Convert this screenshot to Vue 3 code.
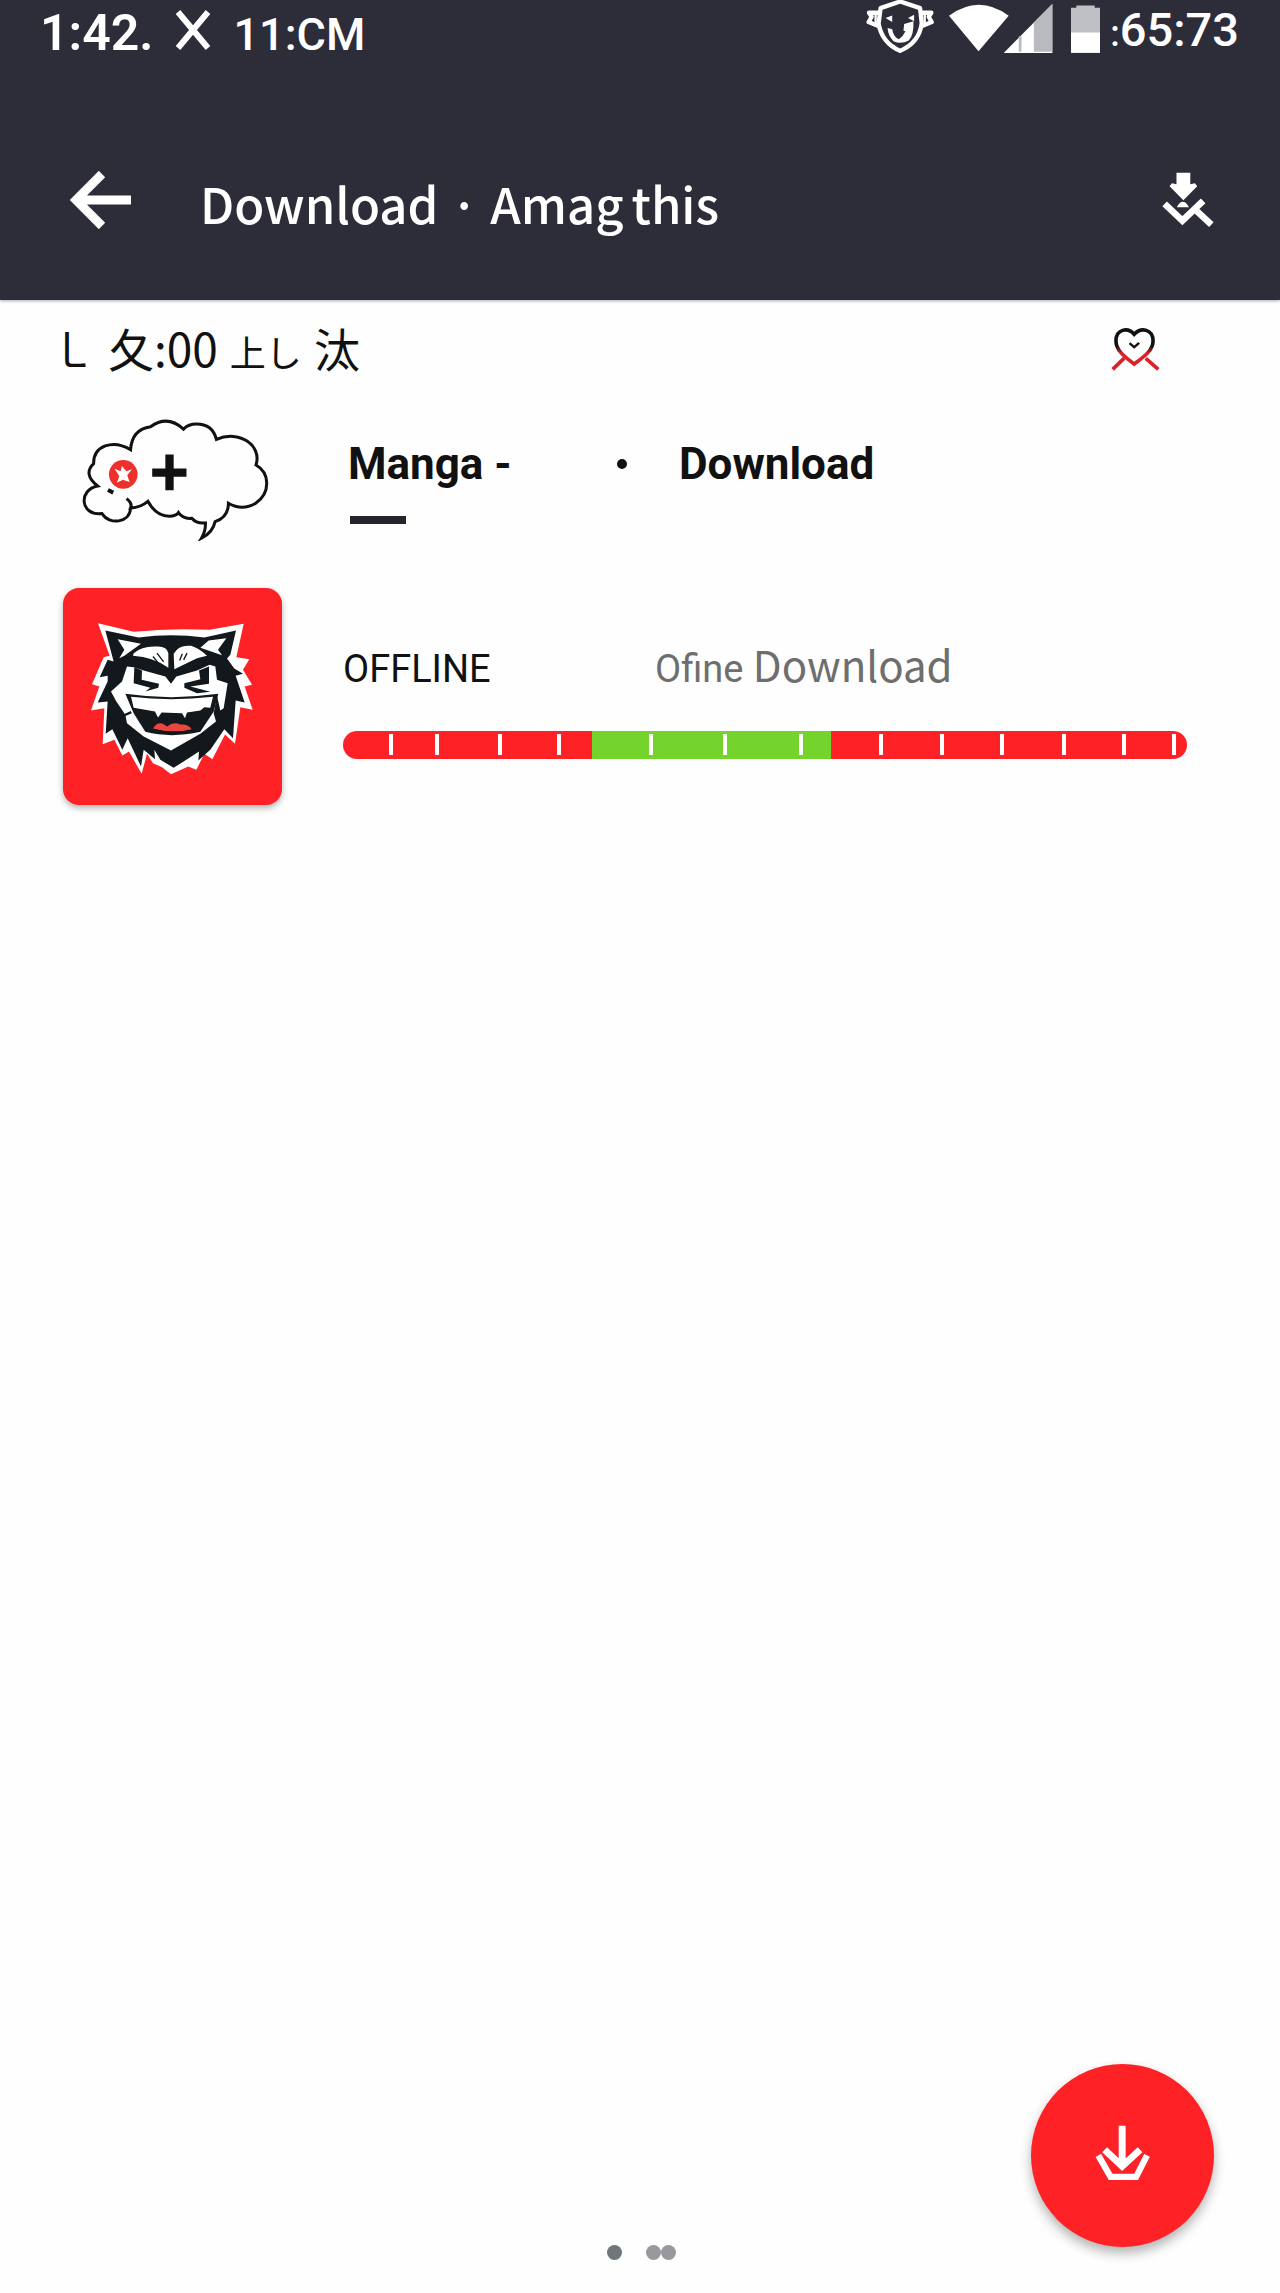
<template>
  <div class="page">
    <header class="topo">
      <div class="status">
        <div class="status-texto">
          <span class="hora">1:42.</span>
          <svg class="icone-x" viewBox="0 0 36 40" aria-hidden="true">
            <path d="M3 2 L33 38 M33 2 L3 38" stroke="#fff" stroke-width="6" />
          </svg>
          <span class="operadora">11:CM</span>
        </div>
        <div class="status-icones">
          <svg class="mascote" viewBox="75 0 205 165" aria-hidden="true">
            <g fill="none" stroke="#fff" stroke-width="13" stroke-linejoin="round">
              <path d="M119 24 L178 4 L238 24 L243 70 Q236 128 178 153 Q122 128 113 70 Z" />
              <path d="M117 38 L84 38 L92 50 L83 66 L112 78 M240 38 L272 38 L264 50 L273 66 L244 78" />
              <path d="M104 40 V72 M252 40 V72" stroke-width="7" />
            </g>
            <path d="M134 54 L154 46 L154 66 Z M202 54 L220 44 L220 64 Z" fill="#fff" />
            <path d="M140 84 L154 88 Q158 112 174 118 Q188 108 194 94 L188 92 L190 72 L218 64 Q220 104 204 122 Q180 134 158 124 Q142 108 140 84 Z" fill="#fff" />
          </svg>
          <svg class="rede" viewBox="325 12 310 146" aria-hidden="true">
            <path d="M325 47 Q414 -18 503 47 L413 153 Z" fill="#fff" />
            <path d="M633 12 L633 158 L488 158 Z" fill="#fff" />
            <path d="M633 12 L633 154 L578 154 L578 67 Z" fill="#b9b9c0" />
            <path d="M537 108 L537 154" stroke="#b9b9c0" stroke-width="8" />
          </svg>
          <svg class="bateria" viewBox="690 14 87 143" aria-hidden="true">
            <path d="M690 22 H706 V15 H761 V22 H777 V157 H690 Z" fill="#bfbfc6" />
            <path d="M690 96 H777 V157 H690 Z" fill="#fff" />
          </svg>
          <span class="relogio"><small>:</small>65:73</span>
        </div>
      </div>
      <div class="barra">
        <button class="botao-icone" aria-label="Back">
          <svg class="seta" viewBox="0 0 62 58">
            <path d="M32 3 L6 29 L32 55 M7 29 H61" fill="none" stroke="#fff" stroke-width="9" />
          </svg>
        </button>
        <h1><span>Download</span><span class="ponto-titulo">·</span><span>Amag</span><span class="fim-titulo">this</span></h1>
        <button class="botao-icone" aria-label="Downloads">
          <svg class="baixados" viewBox="965 510 158 170">
            <path d="M1009 512 H1051 V547 L1065 544 L1072 553 L1030 596 L988 553 L995 544 L1009 547 Z" fill="#fff" />
            <path d="M1010 617 Q1028 584 1047 617 Z" fill="#fff" />
            <path d="M973 607 L1027 658 L1090 598 M1066 624 L1115 670" fill="none" stroke="#fff" stroke-width="20" />
          </svg>
        </button>
      </div>
    </header>

    <main>
      <div class="linha-data">
        <p><span>㇄</span><span>夂:00</span><span class="menor">上し</span><span>汰</span></p>
        <button class="botao-icone" aria-label="Favorite">
          <svg class="coracao" viewBox="153 78 148 134">
            <defs>
              <linearGradient id="corte" x1="0" y1="80" x2="0" y2="195" gradientUnits="userSpaceOnUse">
                <stop offset="0.48" stop-color="#111" />
                <stop offset="0.66" stop-color="#dc2229" />
              </linearGradient>
            </defs>
            <path d="M223 99 C203 76 168 84 168 119 C168 149 197 168 223 189 C250 168 280 149 280 119 C280 84 244 76 223 99 Z" fill="none" stroke="url(#corte)" stroke-width="11" />
            <path d="M209 126 L223 138 L238 125" fill="none" stroke="#111" stroke-width="7" />
            <path d="M193 171 L158 205 M258 172 L296 205" fill="none" stroke="#dc2229" stroke-width="11" />
          </svg>
        </button>
      </div>

      <section class="item">
        <svg class="balao" viewBox="245 350 565 375" aria-hidden="true">
          <g fill="none" stroke="#111" stroke-width="9" stroke-linejoin="miter">
            <path d="M382 598 Q400 612 394 626 Q425 624 446 606 Q470 650 510 651 Q532 650 538 640 Q552 660 578 657 Q592 674 619 671 Q620 696 607 717 Q641 700 648 667 Q688 654 688 612 Q730 636 770 612 C816 580 812 520 771 497 C790 438 720 390 652 420 Q640 374 592 374 Q568 374 553 389 Q505 345 454 382 Q398 390 394 451 C340 418 282 440 283 493 Q250 524 295 560 C238 570 240 650 308 643 C330 678 392 672 394 626" />
          </g>
          <circle cx="372" cy="525" r="43" fill="#ee302c" />
          <path d="M368 500 L381 516 L398 510 L384 528 L391 548 L371 541 L353 550 L360 530 L346 508 L364 516 Z" fill="#fff" />
          <path d="M326 572 L342 580" stroke="#111" stroke-width="12" />
          <path d="M459 520 H562 M511 465 V573" stroke="#111" stroke-width="25" />
        </svg>
        <div class="item-corpo">
          <h2 class="titulo">
            <span>Manga -</span><span class="ponto"></span><span class="titulo-acao">Download</span>
          </h2>
          <div class="traco"></div>
        </div>
      </section>

      <section class="item">
        <div class="capa">
          <svg viewBox="38 55 657 650" aria-hidden="true">
            <path fill="#fff" d="M143 160 L250 186 Q362 174 478 180 L580 162 L558 262 L597 268 L578 300 L605 345 L583 350 L607 420 L570 412 L554 522 L524 494 L486 568 L462 552 L438 600 L414 590 L362 613 L335 592 L308 580 L290 552 L274 612 L236 545 L216 557 L192 510 L157 523 L162 415 L122 422 L147 350 L125 343 L160 262 L178 258 Z" />
            <path fill="#13181c" d="M165 182 L265 203 Q362 190 462 203 L557 182 L540 255 L530 266 L552 296 L578 312 L556 318 L583 398 L556 392 L548 505 L522 478 L480 540 L444 572 L446 545 L408 570 L370 594 L330 570 L312 540 L314 568 L280 540 L272 590 L232 505 L216 540 L186 478 L166 492 L172 395 L142 398 L172 335 L172 318 L148 322 L172 270 L190 275 Z" />
            <path fill="#fff" d="M202 208 L272 222 L222 258 L207 265 L222 240 Z M528 205 L475 212 L450 234 L515 256 L503 240 Z" />
            <path fill="#fff" d="M250 250 Q275 228 318 230 Q350 228 354 250 L354 294 Q310 262 248 258 Z M370 252 Q385 224 422 228 Q445 234 470 258 L440 265 L372 298 Z" />
            <path fill="none" stroke="#13181c" stroke-width="4" d="M308 260 L326 282 M320 250 L340 276 M388 272 L396 252 M400 270 L410 250" />
            <path fill="#fff" d="M230 290 L250 292 L280 302 L345 320 L362 342 L378 320 L440 302 L478 285 L495 290 L500 330 L532 340 L520 415 L510 422 L500 378 L490 430 L497 455 L450 492 L362 542 L280 500 L230 460 L225 435 L198 395 L182 365 L215 335 Z" />
            <path fill="#13181c" d="M252 292 L275 302 L274 330 L326 342 L324 354 L285 365 L268 378 L300 354 L250 340 Z M476 290 L446 302 L450 328 L402 340 L402 354 L440 370 L480 366 L420 350 L476 342 Z" />
            <path fill="#13181c" d="M225 372 Q362 392 504 372 L490 425 L450 486 Q362 506 285 486 L250 430 Z" />
            <path fill="#fff" d="M242 381 Q362 395 488 381 L480 414 L462 412 L450 422 L410 428 L404 445 L395 430 L334 428 L323 443 L314 425 L250 414 Z" />
            <path fill="none" stroke="#13181c" stroke-width="7" d="M214 440 L243 427" />
            <path fill="#ea4640" d="M308 476 Q320 456 338 462 L350 470 Q370 454 390 464 Q415 462 424 478 Q365 492 308 476 Z" />
          </svg>
        </div>
        <div class="item-corpo">
          <div class="estado">
            <span>OFFLINE</span>
            <span class="detalhe">Ofine <b>Download</b></span>
          </div>
          <div class="progresso" role="img" aria-label="Download">
            <div class="feito" :style="{ left: inicio + '%', width: feito + '%' }"></div>
            <i v-for="m in marcas" :key="m" class="marca" :style="{ left: m + '%' }"></i>
          </div>
        </div>
      </section>
    </main>

    <footer>
      <span class="bolinha escura"></span>
      <span class="bolinha"></span>
      <span class="bolinha"></span>
    </footer>

    <button class="fab" aria-label="Download">
      <svg viewBox="286 282 166 168">
        <path d="M368 284 V405 M315 356 L368 406 L422 356" fill="none" stroke="#fff" stroke-width="21" />
        <path d="M296 373 L333 438 H410 L443 373" fill="none" stroke="#fff" stroke-width="19" />
      </svg>
    </button>
  </div>
</template>

<script setup>
import { ref } from 'vue';

// posições em % da largura da barra
const inicio = ref(29.5);
const feito = ref(28.3);
const marcas = ref([5.4, 10.9, 18.4, 25.4, 36.3, 45, 54, 63.5, 70.7, 77.9, 85.2, 92.3, 98.2]);
</script>

<style>
body {
  margin: 0;
  background-color: #fefefe;
}
</style>

<style scoped>
.page {
  min-height: 100vh;
  display: flex;
  flex-direction: column;
  font-family: Roboto, "Noto Sans CJK JP", sans-serif;
  color: #111;
}

.page svg {
  display: block;
  flex-shrink: 0;
}

.botao-icone {
  border: none;
  background: none;
  padding: 0;
  cursor: pointer;
}

.topo {
  background-color: #2c2d39;
  color: white;
  box-shadow: 0 1px 3px rgba(44, 45, 57, 0.4);
}

.status {
  display: flex;
  justify-content: space-between;
  align-items: flex-start;
  height: 100px;
  padding: 0 41px 0 40px;
}

.status-texto {
  display: flex;
  align-items: baseline;
  line-height: 66px;
}

.hora {
  font-size: 50px;
  font-weight: 600;
}

.icone-x {
  width: 36px;
  height: 40px;
  margin: 0 23px 0 21px;
}

.operadora {
  font-size: 45px;
  font-weight: 500;
}

.status-icones {
  display: flex;
  align-items: flex-start;
}

.mascote {
  width: 68px;
  height: 55px;
}

.rede {
  width: 104px;
  height: 49px;
  margin: 4px 18px 0 15px;
}

.bateria {
  width: 29px;
  height: 48px;
  margin-top: 5px;
}

.relogio {
  margin-left: 10px;
  font-size: 47px;
  font-weight: 500;
  line-height: 60px;
}

.relogio small {
  font-size: 36px;
}

.barra {
  display: flex;
  align-items: center;
  height: 200px;
  padding: 0 66px 0 70px;
}

.seta {
  width: 62px;
  height: 58px;
}

.barra h1 {
  flex: 1;
  display: flex;
  margin: 4px 0 0 68px;
  font-family: "Noto Sans CJK JP", sans-serif;
  font-size: 49px;
  font-weight: 500;
}

.ponto-titulo {
  width: 52px;
  text-align: center;
}

.fim-titulo {
  margin-left: 8px;
}

.baixados {
  width: 52px;
  height: 56px;
}

.linha-data {
  display: flex;
  align-items: center;
  justify-content: space-between;
  height: 98px;
  margin-bottom: 2px;
  padding: 0 120px 0 50px;
}

.linha-data p {
  display: flex;
  align-items: baseline;
  gap: 12px;
  margin: 0;
  font-family: "Noto Sans CJK JP", sans-serif;
  font-size: 46px;
  line-height: 64px;
}

.linha-data .menor {
  font-size: 36px;
}

.coracao {
  width: 49px;
  height: 45px;
}

.item {
  display: flex;
  padding: 0 93px 0 63px;
}

.item-corpo {
  flex: 1;
  margin-left: 61px;
}

.balao {
  width: 188px;
  height: 125px;
  margin: 16px 13px 47px 18px;
}

.titulo {
  display: flex;
  align-items: center;
  margin: 36px 0 24px 5px;
  font-size: 44px;
  line-height: 56px;
  font-weight: 700;
}

.titulo span:first-child {
  width: 269px;
}

.ponto {
  width: 10px;
  height: 10px;
  border-radius: 50%;
  background-color: #111;
}

.titulo-acao {
  margin-left: 52px;
}

.traco {
  width: 56px;
  height: 8px;
  margin-left: 7px;
  background-color: #23252b;
}

.capa {
  width: 219px;
  height: 217px;
  border-radius: 16px;
  background-color: #fe2126;
  box-shadow: 0 3px 6px rgba(0, 0, 0, 0.3);
}

.capa svg {
  width: 100%;
  height: 100%;
}

.estado {
  display: flex;
  align-items: baseline;
  margin-top: 46px;
  font-size: 38px;
  line-height: 60px;
}

.estado span:first-child {
  width: 312px;
}

.detalhe {
  color: #6e6e6e;
}

.detalhe b {
  font-family: "Noto Sans CJK JP", sans-serif;
  font-size: 42px;
  font-weight: 400;
}

.progresso {
  position: relative;
  height: 28px;
  margin-top: 32px;
  border-radius: 14px;
  background-color: #fe2126;
  overflow: hidden;
}

.feito {
  position: absolute;
  top: 0;
  bottom: 0;
  background-color: #74d42b;
}

.marca {
  position: absolute;
  top: 3px;
  bottom: 4px;
  width: 4px;
  background-color: white;
}

footer {
  display: flex;
  justify-content: center;
  margin-top: auto;
  padding: 0 0 33px 2px;
}

.bolinha {
  width: 15px;
  height: 15px;
  border-radius: 50%;
  background-color: #99999d;
}

.escura {
  margin-right: 24px;
  background-color: #6f777a;
}

.fab {
  position: fixed;
  right: 66px;
  bottom: 46px;
  width: 183px;
  height: 183px;
  display: flex;
  align-items: center;
  justify-content: center;
  padding: 0 0 5px;
  border: none;
  border-radius: 50%;
  background-color: #fe2126;
  box-shadow: 0 6px 12px rgba(0, 0, 0, 0.3);
  cursor: pointer;
}

.fab svg {
  width: 55px;
  height: 56px;
}
</style>
